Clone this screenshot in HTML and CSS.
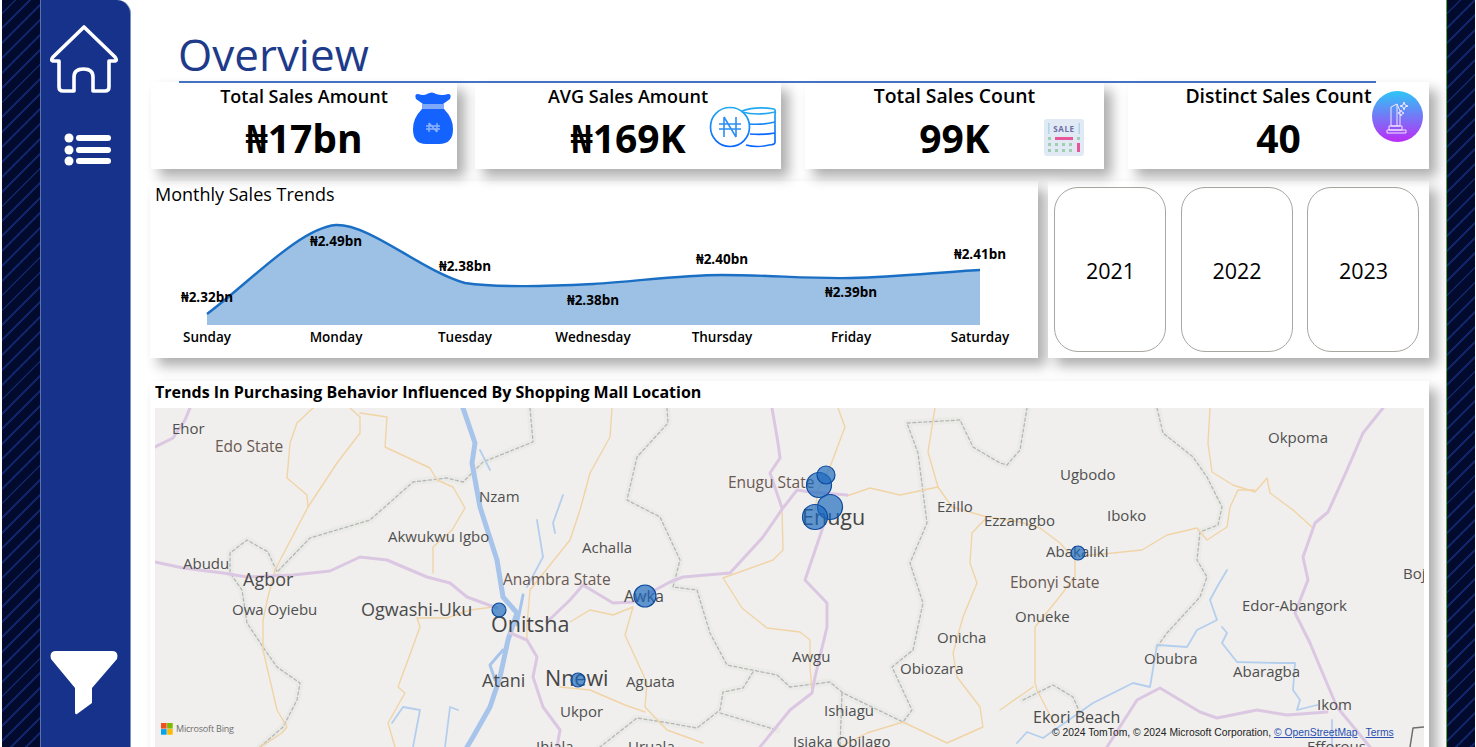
FILE: index.html
```html
<!DOCTYPE html>
<html lang="en">
<head>
<meta charset="utf-8">
<title>Overview</title>
<link rel="stylesheet" href="styles.css">
</head>
<body>
<div class="page">
  <div class="strip strip-left"></div>
  <nav class="sidebar">
    <svg class="nav-home" width="70" height="70" viewBox="0 0 70 70"><path d="M34 2 L3 32 Q0 36 4 36 H9 V62 Q9 66 13 66 H24 V52 Q24 44 33.5 44 Q43 44 43 52 V66 H55 Q59 66 59 62 V36 H64 Q68 36 65 32 Z" fill="none" stroke="#fff" stroke-width="3.6" stroke-linejoin="round"/></svg>
    <svg class="nav-list" width="48" height="34" viewBox="0 0 48 34"><g fill="#fff"><circle cx="5" cy="5" r="4.5"/><circle cx="5" cy="17" r="4.5"/><circle cx="5" cy="28" r="4.5"/><rect x="12" y="2" width="35" height="6" rx="3"/><rect x="12" y="14" width="35" height="6" rx="3"/><rect x="12" y="25" width="35" height="6" rx="3"/></g></svg>
    <svg class="nav-filter" width="70" height="66" viewBox="0 0 70 66"><path d="M6 1 H62 Q69 1 67 9 L42 38 V53 L27 64 Q25 65 25 62 V38 L1 9 Q-1 1 6 1 Z" fill="#fff"/></svg>
  </nav>
  <main class="main">
    <header class="header"><h1 class="title">Overview</h1></header>
    <section class="cards">
      <article class="card">
        <h2 class="card-label">Total Sales Amount</h2>
        <p class="card-value">₦17bn</p>
        <svg class="card-icon icon-bag" width="42" height="54" viewBox="0 0 42 54"><path d="M6 3 Q12 5 15 3 Q20 0 24 3 Q30 5 36 3 Q40 3 38 8 L31 13 H11 L4 8 Q2 3 6 3 Z" fill="#1463ff"/><rect x="10" y="13" width="22" height="5" fill="#7fa8fb"/><path d="M10 18 H32 Q41 27 41 38 Q41 53 27 53 H14 Q1 53 1 38 Q1 27 10 18 Z" fill="#1463ff"/><path d="M17 32 V41 M25 32 V41 M14 35 H28 M14 38 H28 M17 32 L25 41" stroke="#8db2fc" stroke-width="1.4" fill="none"/></svg>
      </article>
      <article class="card card-avg">
        <h2 class="card-label">AVG Sales Amount</h2>
        <p class="card-value">₦169K</p>
        <svg class="card-icon icon-coins" width="68" height="44" viewBox="0 0 68 44"><defs><linearGradient id="cg" x1="0" y1="0" x2="0" y2="1"><stop offset="0" stop-color="#22aaf0"/><stop offset="1" stop-color="#0a66ff"/></linearGradient></defs><g fill="none" stroke="url(#cg)" stroke-width="1.7"><path d="M33 6 Q47 1 65 4 Q67 5 66 9 V37 Q66 40 60 40 Q48 43 37 40"/><path d="M33 7 Q48 11 66 7 M40 19 Q55 20 66 17 M41 29 Q55 30 66 28"/><circle cx="21" cy="22" r="19.5"/></g><path d="M15 12 V32 M27 12 V32 M15 12 L27 32 M10 19 H32 M10 24 H32" fill="none" stroke="#2c8ff2" stroke-width="1.6"/></svg>
      </article>
      <article class="card card-count">
        <h2 class="card-label card-label-lg">Total Sales Count</h2>
        <p class="card-value">99K</p>
        <svg class="card-icon icon-sale" width="40" height="37" viewBox="0 0 40 37"><rect width="40" height="37" rx="3" fill="#e1e9f5"/><rect x="4" y="4" width="32" height="11" fill="#a9d6ee"/><rect x="5.5" y="4" width="29" height="11" fill="#e1e9f5"/><text class="sale-text" x="20" y="13">SALE</text><g fill="#9fcfae"><rect x="4" y="18" width="3" height="3"/><rect x="33" y="18" width="3" height="3"/><rect x="4" y="24" width="3" height="3"/><rect x="11" y="24" width="3" height="3"/><rect x="18" y="24" width="3" height="3"/><rect x="25" y="24" width="3" height="3"/><rect x="4" y="30" width="3" height="3"/><rect x="11" y="30" width="3" height="3"/><rect x="18" y="30" width="3" height="3"/><rect x="25" y="30" width="3" height="3"/></g><rect x="11" y="18" width="18" height="3" fill="#e8559a"/><rect x="33" y="24" width="3" height="9" fill="#e8559a"/></svg>
      </article>
      <article class="card card-distinct">
        <h2 class="card-label card-label-lg">Distinct Sales Count</h2>
        <p class="card-value">40</p>
        <svg class="card-icon icon-trophy" width="51" height="51" viewBox="0 0 51 51"><defs><linearGradient id="tg" x1="0" y1="0" x2="0" y2="1"><stop offset="0" stop-color="#2cc6f6"/><stop offset="1" stop-color="#bb2cf6"/></linearGradient></defs><circle cx="25.5" cy="25.5" r="25.5" fill="url(#tg)"/><g fill="none" stroke="#f3e6ff" stroke-width="1"><path d="M19 16 L25 13 L28 20 V35 H19 Z M25 13 V35"/><path d="M17 35 H30 V39 H17 Z M15 39 H34 V42 H15 Z"/><path d="M32 11 L33 14 L36 15 L33 16 L32 19 L31 16 L28 15 L31 14 Z"/><path d="M29 19 L30 21 L32 22 L30 23 L29 25 L28 23 L26 22 L28 21 Z"/></g></svg>
      </article>
    </section>
    <section class="middle">
      <div class="panel chart-panel">
        <h2 class="chart-title">Monthly Sales Trends</h2>
        <svg class="chart" width="888" height="150" viewBox="150 208 888 150">
          <path d="M207 314 C250 282 300 228 336 225 C370 224 420 270 465 283 C500 288 550 286 593 284 C640 281 680 275 722 275 C770 275 810 279 851 278 C900 277 940 272 980 270 L980 325 L207 325 Z" fill="#9dc1e5"/>
          <path d="M207 314 C250 282 300 228 336 225 C370 224 420 270 465 283 C500 288 550 286 593 284 C640 281 680 275 722 275 C770 275 810 279 851 278 C900 277 940 272 980 270" fill="none" stroke="#1a6fc4" stroke-width="2.4"/>
          <g class="chart-data">
            <text x="207" y="302">₦2.32bn</text><text x="336" y="246">₦2.49bn</text><text x="465" y="271">₦2.38bn</text><text x="593" y="305">₦2.38bn</text><text x="722" y="264">₦2.40bn</text><text x="851" y="297">₦2.39bn</text><text x="980" y="259">₦2.41bn</text>
          </g>
          <g class="chart-axis">
            <text x="207" y="342">Sunday</text><text x="336" y="342">Monday</text><text x="465" y="342">Tuesday</text><text x="593" y="342">Wednesday</text><text x="722" y="342">Thursday</text><text x="851" y="342">Friday</text><text x="980" y="342">Saturday</text>
          </g>
        </svg>
      </div>
      <div class="panel years">
        <button class="year">2021</button>
        <button class="year">2022</button>
        <button class="year">2023</button>
      </div>
    </section>
    <section class="panel map-panel">
      <h2 class="map-title">Trends In Purchasing Behavior Influenced By Shopping Mall Location</h2>
      <div class="map">
        <svg class="map-svg" width="1269" height="339" viewBox="155 408 1269 339">
          <defs>
            <path id="b1" d="M530 408 L533 442 L483 462 L463 482 L447 478 L413 482 L370 520 L310 538 L277 572 L268 552 L247 540 L230 553 L230 573 L242 590 L247 623 L263 647 L277 667 L300 683 L297 700 L283 727 L260 747"/>
            <path id="b2" d="M667 408 L668 423 L637 457 L627 500 L660 517 L680 560 L673 587 L697 590 L710 633 L727 665 L777 675 L790 687 L830 682 L843 693 L903 722 L912 710 L892 667 L913 650 L923 603 L910 563 L927 523 L918 453 L907 423 L960 420 L973 447 L1000 463 L1007 465 L1020 450 L1027 408"/>
            <path id="b3" d="M1157 408 L1163 433 L1193 457 L1207 477 L1222 507 L1218 525 L1200 532 L1197 560 L1207 577 L1200 597 L1167 633 L1157 647"/>
            <path id="b4" d="M1023 700 L1053 685 L1073 697 L1080 713 M753 672 L743 688 L723 692 L720 710 L697 728 L663 722 L637 718 L600 747 M720 713 L777 730 M842 693 L840 747"/>
          </defs>
          <g class="halo">
            <use href="#b1"/><use href="#b2"/><use href="#b3"/><use href="#b4"/>
          </g>
          <g class="dash">
            <use href="#b1"/><use href="#b2"/><use href="#b3"/><use href="#b4"/>
          </g>
          <g class="roads">
            <path d="M313 408 L297 423 L290 443 L287 478 L307 495 L308 507 L275 570 L268 597 L263 620 L263 650 L277 710 L287 727 L282 733 L260 747"/>
            <path d="M308 507 L337 463 L360 433 L360 417 L350 408"/>
            <path d="M360 413 L387 417 L385 447 L430 468 L437 480 L453 487 L465 508 L452 530 L433 547 L433 573"/>
            <path d="M493 607 L470 610 L447 618 L417 618 L420 627 L398 687 L405 693 L388 723 L395 747"/>
            <path d="M612 408 L610 437 L590 473 L580 510 L570 540 L530 590 L527 625 L527 640"/>
            <path d="M570 622 L590 610 L613 615 L633 607 L625 635 L647 683 L645 707 L667 730 L703 743"/>
            <path d="M560 687 L590 690 L625 705 L645 712"/>
            <path d="M838 408 L845 427 L830 467 L818 490 L815 510"/>
            <path d="M847 496 L870 488 L900 495 L938 487 L928 452 L935 408"/>
            <path d="M938 487 L952 507 L987 517 L1020 522 L1040 528 L1060 543 L1075 560 L1075 577 L1057 600 L1035 627 L1035 683 L1037 690 L1055 725 M1033 687 L1000 710"/>
            <path d="M987 517 L972 533 L970 563 L977 583 L963 617 L953 653 L957 677 L980 707 L983 727 L947 743 L903 722 L867 733 L840 747"/>
            <path d="M782 508 L783 550 L773 560 L723 578 L742 608 L767 628 L800 632 L810 640 L810 667 L812 690"/>
            <path d="M1210 408 L1208 443 L1212 472 L1233 485 L1255 492 L1267 478 L1270 493 L1293 510 L1313 528"/>
            <path d="M1255 490 L1238 490 L1230 507 L1227 527 L1207 540 L1197 528 L1167 535 L1142 550 L1113 553 L1080 556"/>
          </g>
          <g class="rivers">
            <path d="M527 587 L543 557 L537 520 M563 495 L553 523 L555 533 M392 723 L403 707 L420 710 L413 747 M445 747 L450 707 L458 710 M480 450 L490 470"/>
            <path d="M1227 570 L1217 587 L1210 600 L1217 620 L1197 630 L1187 647 L1157 645 L1150 687 L1133 683 L1093 703 L1043 738 L1027 732 L1017 743"/>
            <path d="M1222 627 L1227 633 L1222 643 L1237 662 L1280 663 L1295 663 L1293 690 L1300 700 L1297 710 L1317 705 M1332 720 L1332 747"/>
          </g>
          <path class="niger" d="M463 408 L475 443 L472 463 L480 507 L497 560 L503 597 L517 613 L508 640 L500 677 L490 707 L473 737 L467 747"/>
          <path class="niger-thin" d="M523 595 L517 625 M503 650 L490 665 L495 680"/>
          <g class="highway">
            <path d="M155 562 L183 568 L223 573 L247 577 L293 575 L330 571 L360 557 L387 560 L427 577 L450 583 L467 597 L497 608"/>
            <path d="M155 447 L173 438 L185 420 L190 408"/>
            <path d="M510 633 L527 640 L537 657 L533 677 L543 707 L560 730 L557 747"/>
            <path d="M547 622 L570 600 L583 585 L613 603 L633 602 L670 582 L683 577 L730 573 L763 537 L783 508 L797 490 L810 492 L847 495"/>
            <path d="M772 408 L778 443 L780 458 L770 473 L782 508"/>
            <path d="M823 527 L805 580 L827 603 L827 627 L815 677 L812 693 L790 710 L760 747"/>
            <path d="M1383 408 L1363 433 L1347 470 L1328 512 L1315 523 L1303 557 L1308 580 L1295 613 L1310 643 L1320 667 L1337 707 L1370 747"/>
            <path d="M1107 747 L1137 700 L1160 688 L1200 712 L1217 718 L1257 710 L1287 715 L1327 712"/>
          </g>
          <path class="dark-road" d="M1410 747 L1413 728 L1424 727"/>
          <g class="place">
            <text x="172" y="434">Ehor</text><text x="479" y="502">Nzam</text><text x="388" y="542">Akwukwu Igbo</text><text x="183" y="569">Abudu</text><text x="232" y="615">Owa Oyiebu</text><text x="582" y="553">Achalla</text><text x="626" y="687">Aguata</text><text x="560" y="717">Ukpor</text><text x="536" y="752">Ihiala</text><text x="628" y="752">Uruala</text><text x="937" y="512">Ezillo</text><text x="984" y="526">Ezzamgbo</text><text x="1060" y="480">Ugbodo</text><text x="1268" y="443">Okpoma</text><text x="1107" y="521">Iboko</text><text x="1046" y="557">Abakaliki</text><text x="1015" y="622">Onueke</text><text x="937" y="643">Onicha</text><text x="900" y="674">Obiozara</text><text x="792" y="662">Awgu</text><text x="824" y="716">Ishiagu</text><text x="793" y="747">Isiaka Obilago</text><text x="1144" y="664">Obubra</text><text x="1233" y="677">Abaragba</text><text x="1317" y="710">Ikom</text><text x="1242" y="611">Edor-Abangork</text><text x="1403" y="579">Boj</text><text x="1307" y="752">Efforous</text>
          </g>
          <g class="state">
            <text x="215" y="452">Edo State</text><text x="503" y="585">Anambra State</text><text x="728" y="488">Enugu State</text><text x="1010" y="588">Ebonyi State</text>
          </g>
          <g class="place-sm">
            <text x="624" y="602">Awka</text><text x="1033" y="723">Ekori Beach</text>
          </g>
          <g class="place-md">
            <text x="243" y="586">Agbor</text><text x="361" y="616">Ogwashi-Uku</text><text x="482" y="687">Atani</text>
          </g>
          <g class="place-lg">
            <text x="491" y="632">Onitsha</text><text x="545" y="686">Nnewi</text><text x="802" y="525">Enugu</text>
          </g>
          <g class="bubbles">
            <circle cx="819" cy="485" r="12.5"/><circle cx="826" cy="475" r="9"/><circle cx="830" cy="507" r="12.5"/><circle cx="815" cy="517" r="12.5"/><circle cx="1078" cy="553" r="7"/><circle cx="645" cy="596" r="11"/><circle cx="578" cy="680" r="7"/><circle cx="499" cy="610" r="7"/>
          </g>
        </svg>
        <div class="bing">
          <svg width="12" height="12" viewBox="0 0 12 12"><rect width="5.6" height="5.6" fill="#f25022"/><rect x="6.1" width="5.6" height="5.6" fill="#7fba00"/><rect y="6.1" width="5.6" height="5.6" fill="#00a4ef"/><rect x="6.1" y="6.1" width="5.6" height="5.6" fill="#ffb900"/></svg>
          <span>Microsoft Bing</span>
        </div>
        <div class="attribution">© 2024 TomTom, © 2024 Microsoft Corporation, <a href="#">© OpenStreetMap</a><a class="terms" href="#">Terms</a></div>
      </div>
    </section>
  </main>
  <div class="strip strip-right"></div>
</div>
</body>
</html>
```
FILE: styles.css
```css
* { box-sizing: border-box; }
html, body { margin: 0; padding: 0; height: 100%; overflow: hidden; background: #fff; }
body { font-family: "Open Sans", "Noto Sans", "DejaVu Sans", sans-serif; color: #000; }
.page { display: flex; width: 1476px; height: 747px; overflow: hidden; }

.strip {
  background-color: #020a2e;
  background-image: repeating-linear-gradient(135deg, #020a2e 0 8.5px, #10246a 8.5px 10.5px);
}
.strip-left { width: 39px; margin-left: 2px; margin-right: -1px; flex: none; }
.strip-right { width: 29px; flex: none; border-left: 1.5px solid #58a83e; }

.sidebar {
  width: 91px; flex: none; display: flex; flex-direction: column; padding-top: 25px;
  background: #17328a; border-left: 1px solid #5a72a8; border-right: 1.5px solid #7b90bd;
  border-top-right-radius: 14px;
}
.nav-home { margin-left: 9px; flex: none; }
.nav-list { margin: 38px 0 0 23px; flex: none; }
.nav-filter { margin: auto 0 31px 9px; flex: none; }

.main { width: 1315px; flex: none; display: flex; flex-direction: column; background: #fff; padding-left: 19px; }
.header { flex: none; height: 83px; margin-bottom: -1px; margin-left: 29px; width: 1197px; border-bottom: 2.5px solid #4472c4; position: relative; z-index: 2; }
.title { margin: 0 0 0 -1px; padding-top: 29px; font-size: 44px; line-height: 50px; font-weight: 400; color: #1e3a8a; }

.cards { flex: none; display: flex; margin-left: 1px; height: 87px; }
.card { position: relative; flex: none; width: 306px; background: #fff; box-shadow: 8px 8px 12px rgba(0,0,0,.32); text-align: center; }
.card-avg { margin-left: 18px; }
.card-count { margin-left: 24px; width: 299px; }
.card-distinct { margin-left: 24px; width: 301px; }
.card-label { margin: 2px 0 0; font-size: 18px; line-height: 24px; font-weight: 600; }
.card-label-lg { font-size: 19.4px; }
.card-value { margin: 5px 0 0; font-size: 39px; line-height: 50px; font-weight: 700; }
.card-icon { position: absolute; }
.icon-bag { left: 260.5px; top: 9px; }
.icon-coins { left: 234px; top: 23px; }
.icon-sale { left: 239px; top: 37px; }
.icon-trophy { left: 244px; top: 9px; }
.sale-text { font-size: 8px; font-weight: 700; fill: #6b6ba8; text-anchor: middle; letter-spacing: .6px; }

.panel { background: #fff; box-shadow: 8px 8px 12px rgba(0,0,0,.32); }
.middle { flex: none; display: flex; margin-top: 12px; height: 177px; }
.chart-panel { width: 888px; flex: none; }
.chart-title { margin: 0; padding: 1px 0 0 5px; height: 27px; font-size: 18px; line-height: 24px; font-weight: 400; }
.chart { display: block; }
.chart-data text { font-size: 13.5px; font-weight: 700; text-anchor: middle; }
.chart-axis text { font-size: 13.5px; font-weight: 600; text-anchor: middle; }
.years { width: 381px; flex: none; margin-left: 10px; padding: 6px 10px 6px 6px; display: flex; justify-content: space-between; }
.year { width: 112px; height: 165px; background: #fff; border: 1px solid #aaa6a1; border-radius: 24px; font: 400 21.5px "Open Sans", sans-serif; color: #000; padding: 2px 0 0 1px; }

.map-panel { flex: none; width: 1279px; margin-top: 23px; height: 420px; padding: 0 5px; }
.map-title { margin: 0; height: 27px; padding: 0; font-size: 16px; line-height: 23px; font-weight: 700; white-space: nowrap; }
.map { position: relative; width: 1269px; height: 339px; background: #f0efed; overflow: hidden; }
.map-svg { display: block; }
.map-svg path { stroke-linejoin: round; stroke-linecap: round; fill: none; }
.halo { fill: none; stroke: #eaeae7; stroke-width: 7; stroke-linejoin: round; }
.dash { fill: none; stroke: #b6b6b6; stroke-width: 1.3; stroke-dasharray: 3 2.5; }
.roads path { stroke: #f1d4a6; stroke-width: 1.4; }
.rivers path { stroke: #b4cfee; stroke-width: 1.8; }
.niger { stroke: #a7c4ea; stroke-width: 5; }
.niger-thin { stroke: #a7c4ea; stroke-width: 3; }
.highway path { stroke: #dbc7e2; stroke-width: 3; }
.dark-road { stroke: #6e6e6e; stroke-width: 1.5; }
.place text { font-size: 15px; fill: #4f4f4f; }
.state text { font-size: 15.5px; fill: #6a5852; }
.place-sm text { font-size: 16px; fill: #4a4a4a; }
.place-md text { font-size: 18px; fill: #4a4a4a; }
.place-lg text { font-size: 21.5px; fill: #454545; }
.bubbles circle { fill: rgba(26,104,190,.68); stroke: #0d4a9e; stroke-width: 1.2; }
.bing { position: absolute; left: 6px; top: 315px; display: flex; align-items: center; gap: 3px; font-size: 9px; line-height: 12px; color: #6d6d6d; letter-spacing: -.2px; }
.bing svg { display: block; }
.attribution { position: absolute; left: 897px; top: 319px; font: 10.35px/12px "Liberation Sans", sans-serif; color: #222; white-space: nowrap; }
.attribution a { color: #2a4fb0; text-decoration: underline; }
.attribution .terms { margin-left: 8px; }
```
